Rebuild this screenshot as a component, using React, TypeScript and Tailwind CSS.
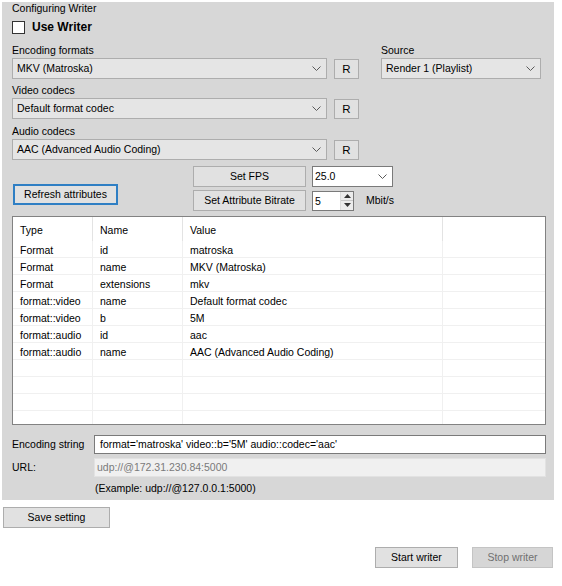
import type { ReactNode } from "react";

const rows: [string, string, string][] = [
  ["Format", "id", "matroska"],
  ["Format", "name", "MKV (Matroska)"],
  ["Format", "extensions", "mkv"],
  ["format::video", "name", "Default format codec"],
  ["format::video", "b", "5M"],
  ["format::audio", "id", "aac"],
  ["format::audio", "name", "AAC (Advanced Audio Coding)"],
  ["", "", ""],
  ["", "", ""],
  ["", "", ""],
  ["", "", ""],
];

function Chevron() {
  return (
    <svg width="9" height="5" viewBox="0 0 9 5" className="shrink-0">
      <polyline points="0.5,0.5 4.5,4.5 8.5,0.5" fill="none" stroke="#5a5a5a" strokeWidth="1" />
    </svg>
  );
}

function Combo({ value, width, white }: { value: string; width: string; white?: boolean }) {
  return (
    <div
      className={`flex h-[21px] items-center justify-between border pr-[5px] ${width} ${
        white ? "border-[#7a7a7a] bg-white pl-[2px]" : "border-[#adadad] bg-[#e5e5e5] pl-[4px]"
      }`}
    >
      <span>{value}</span>
      <Chevron />
    </div>
  );
}

// height goes in className so it never clashes with a default
function Btn({ children, className = "" }: { children: ReactNode; className?: string }) {
  return (
    <div className={`flex items-center justify-center border border-[#adadad] bg-[#e1e1e1] ${className}`}>
      {children}
    </div>
  );
}

function RBtn() {
  return <Btn className="ml-[7px] mt-[1px] h-[20px] w-[25px] text-[11.5px]">R</Btn>;
}

function Label({ children, className = "" }: { children: ReactNode; className?: string }) {
  return <div className={`h-[13px] leading-[13px] ${className}`}>{children}</div>;
}

export default function App() {
  return (
    <div className="h-[586px] w-[562px] bg-white font-['Liberation_Sans',Arial,sans-serif] text-[10.5px] leading-[13px] text-black">
      <div className="ml-[2px] flex h-[500px] w-[552px] flex-col border-t-2 border-white bg-[#d7d7d7] pl-[10px]">
        <div className="h-[13px]">Configuring Writer</div>

        <div className="mt-[6px] flex h-[13px] items-center">
          <div className="h-[13px] w-[13px] border border-[#333] bg-white" />
          <span className="ml-[7px] text-[12px] font-bold">Use Writer</span>
        </div>

        <div className="mt-[10px] flex">
          <div className="flex w-[347px] flex-col">
            <Label>Encoding formats</Label>
            <div className="mt-[1px] flex">
              <Combo value="MKV (Matroska)" width="w-[315px]" />
              <RBtn />
            </div>
            <Label className="mt-[5px]">Video codecs</Label>
            <div className="mt-[1px] flex">
              <Combo value="Default format codec" width="w-[315px]" />
              <RBtn />
            </div>
            <Label className="mt-[6px]">Audio codecs</Label>
            <div className="mt-[1px] flex">
              <Combo value="AAC (Advanced Audio Coding)" width="w-[315px]" />
              <RBtn />
            </div>
          </div>
          <div className="ml-[22px] flex w-[160px] flex-col">
            <Label>Source</Label>
            <div className="mt-[1px]">
              <Combo value="Render 1 (Playlist)" width="w-[160px]" />
            </div>
          </div>
        </div>

        <div className="mt-[6px] flex items-start">
          <div className="ml-[1px] mt-[18px] flex h-[21px] w-[105px] items-center justify-center border-2 border-[#2f7fc4] bg-[#e1e1e1]">
            Refresh attributes
          </div>
          <div className="ml-[75px] flex flex-col gap-[3px]">
            <div className="flex items-center">
              <Btn className="h-[21px] w-[113px]">Set FPS</Btn>
              <div className="ml-[6px]">
                <Combo value="25.0" width="w-[81px]" white />
              </div>
            </div>
            <div className="flex items-center">
              <Btn className="h-[21px] w-[113px]">Set Attribute Bitrate</Btn>
              <div className="ml-[6px] flex h-[20px] w-[42px] border border-[#7a7a7a] bg-white">
                <span className="flex-1 pl-[2px] leading-[18px]">5</span>
                <div className="flex w-[13px] flex-col border-l border-[#dcdcdc] bg-[#ececec]">
                  <div className="flex flex-1 items-center justify-center border-b border-[#c8c8c8]">
                    <svg width="7" height="4" viewBox="0 0 7 4">
                      <polygon points="0,4 3.5,0 7,4" fill="#333" />
                    </svg>
                  </div>
                  <div className="flex flex-1 items-center justify-center">
                    <svg width="7" height="4" viewBox="0 0 7 4">
                      <polygon points="0,0 3.5,4 7,0" fill="#333" />
                    </svg>
                  </div>
                </div>
              </div>
              <span className="ml-[12px]">Mbit/s</span>
            </div>
          </div>
        </div>

        <div className="mt-[5px] h-[209px] w-[534px] overflow-hidden border border-[#828282] bg-white">
          <div className="grid h-[24px] grid-cols-[80px_90px_260px_1fr]">
            {["Type", "Name", "Value", ""].map((h, i) => (
              <div key={i} className={`pl-[7px] pt-[7px] ${i < 3 ? "border-r border-[#e3e3e3]" : ""}`}>
                {h}
              </div>
            ))}
          </div>
          {rows.map((r, i) => (
            <div key={i} className="grid h-[17px] grid-cols-[80px_90px_260px_1fr] border-b border-[#f0f0f0]">
              {[...r, ""].map((c, j) => (
                <div key={j} className={`pl-[7px] pt-[3px] ${j < 3 ? "border-r border-[#f0f0f0]" : ""}`}>
                  {c}
                </div>
              ))}
            </div>
          ))}
        </div>

        <div className="mt-[10px] flex items-center">
          <span className="w-[82px]">Encoding string</span>
          <div className="h-[19px] w-[452px] border border-[#7a7a7a] bg-white pl-[5px] leading-[17px]">
            format='matroska' video::b='5M' audio::codec='aac'
          </div>
        </div>
        <div className="mt-[4px] flex items-center">
          <span className="w-[82px]">URL:</span>
          <div className="h-[19px] w-[452px] border border-[#e2e2e2] bg-[#f0f0f0] pl-[2px] leading-[17px] text-[#7a7a7a]">
            udp://@172.31.230.84:5000
          </div>
        </div>
        <div className="mt-[5px] pl-[83px]">(Example: udp://@127.0.0.1:5000)</div>
      </div>

      <Btn className="ml-[3px] mt-[7px] h-[21px] w-[107px]">Save setting</Btn>

      <div className="ml-[375px] mt-[19px] flex gap-[14px]">
        <Btn className="h-[21px] w-[83px]">Start writer</Btn>
        <div className="flex h-[21px] w-[81px] items-center justify-center border border-[#c4c4c4] bg-[#d6d6d6] text-[#707070]">
          Stop writer
        </div>
      </div>
    </div>
  );
}
